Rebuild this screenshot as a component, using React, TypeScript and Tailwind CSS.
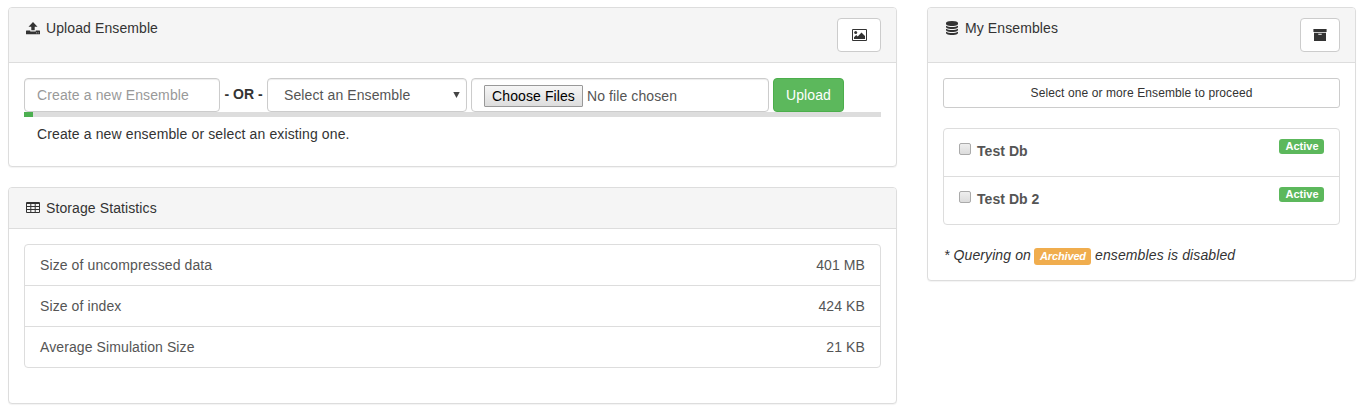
import type { ReactNode } from 'react';

const UploadIcon = () => (
  <svg className="mt-[14px] h-[13px] w-[14px] shrink-0" viewBox="0 0 14 13" fill="currentColor">
    <path d="M7 0 11.500 4.700H8.700V8.200H5.300V4.700H2.500z" />
    <path fillRule="evenodd" d="M.4 8.500h3.900v1h5.400v-1h3.900q.4 0 .4.400v3q0 .4-.4.400H.4q-.4 0-.4-.4v-3q0-.4.4-.4zM10 10.500v.8h.8v-.8zM11.800 10.500v.8h.8v-.8z" />
  </svg>
);

const TableIcon = () => (
  <svg className="mt-[14px] h-[12px] w-[14px] shrink-0" viewBox="0 0 14 12" fill="currentColor">
    <path
      fillRule="evenodd"
      d="M1 0h12a1 1 0 0 1 1 1v9a1 1 0 0 1-1 1H1a1 1 0 0 1-1-1V1a1 1 0 0 1 1-1zM1 2.100v2h3.300v-2zM5.300 2.100v2h3.400v-2zM9.700 2.100v2H13v-2zM1 5.100v2h3.300v-2zM5.300 5.100v2h3.400v-2zM9.700 5.100v2H13v-2zM1 8.100v2h3.300v-2zM5.300 8.100v2h3.400v-2zM9.700 8.100v2H13v-2z"
    />
  </svg>
);

const DatabaseIcon = () => (
  <svg className="mt-[13px] mr-px ml-px h-[14px] w-[12px] shrink-0" viewBox="0 0 1536 1792" preserveAspectRatio="none" fill="currentColor">
    <path d="M768 768q237 0 443-43t325-127v170q0 69-103 128t-280 93.500-385 34.500-385-34.500-280-93.500-103-128V598q119 84 325 127t443 43zM768 1536q237 0 443-43t325-127v170q0 69-103 128t-280 93.500-385 34.500-385-34.500-280-93.500-103-128v-170q119 84 325 127t443 43zM768 1152q237 0 443-43t325-127v170q0 69-103 128t-280 93.500-385 34.500-385-34.500-280-93.500-103-128V982q119 84 325 127t443 43zM768 0q208 0 385 34.500t280 93.500 103 128v128q0 69-103 128t-280 93.500T768 640t-385-34.500T103 512 0 384V256q0-69 103-128t280-93.500T768 0z" />
  </svg>
);

const PictureIcon = () => (
  <svg className="h-[12px] w-[15px]" viewBox="0 0 15 12" fill="currentColor">
    <path fillRule="evenodd" d="M1 0h13a1 1 0 0 1 1 1v10a1 1 0 0 1-1 1H1a1 1 0 0 1-1-1V1a1 1 0 0 1 1-1zM1 1v10h13V1z" />
    <circle cx="3.700" cy="3.500" r="1.500" />
    <path d="M2 10V8.200l2.200-2.200 1.500 1.500L9.500 3.500 13 7V10z" />
  </svg>
);

const ArchiveIcon = () => (
  <svg className="h-[12px] w-[14px]" viewBox="0 0 14 12" fill="currentColor">
    <path d="M.4 0h13.200v3H.4z" />
    <path fillRule="evenodd" d="M1 3.700h12V12H1zM5.300 4.800v1h3.400v-1z" />
  </svg>
);

function Panel({ icon, title, action, className, children }: {
  icon: ReactNode;
  title: string;
  action?: ReactNode;
  className: string;
  children: ReactNode;
}) {
  return (
    <section className={`rounded-[4px] border border-[#ddd] bg-white shadow-[0_1px_1px_rgba(0,0,0,0.05)] ${className}`}>
      <header className={`flex items-start rounded-t-[3px] border-b border-[#ddd] bg-[#f5f5f5] pr-[15px] pl-[17px] ${action ? 'h-[55px]' : 'h-[41px]'}`}>
        {icon}
        <h3 className="ml-[6px] grow pt-[10px]">{title}</h3>
        {action}
      </header>
      <div className="p-[15px]">{children}</div>
    </section>
  );
}

const stats = [
  ['Size of uncompressed data', '401 MB'],
  ['Size of index', '424 KB'],
  ['Average Simulation Size', '21 KB'],
];

export default function App() {
  return (
    <main className="flex h-[415px] items-start gap-[30px] bg-white pt-[7px] pl-[8px] font-['Liberation_Sans',Arial,sans-serif] text-[14px] leading-[20px] tracking-[0.1px] text-[#333]">
      <div className="flex w-[889px] flex-col gap-[20px]">
        <Panel
          className="h-[160px]"
          icon={<UploadIcon />}
          title="Upload Ensemble"
          action={
            <button className="mt-[10px] flex h-[34px] w-[44px] items-center justify-center rounded-[4px] border border-[#ccc] bg-white">
              <PictureIcon />
            </button>
          }
        >
          <form className="flex h-[34px]">
            <input
              className="h-[34px] w-[196px] rounded-[4px] border border-[#ccc] px-[12px] tracking-[0.12px] shadow-[inset_0_1px_1px_rgba(0,0,0,0.075)] placeholder:text-[#999]"
              placeholder="Create a new Ensemble"
            />
            <b className="w-[47px] pt-[6px] text-center tracking-normal whitespace-nowrap">- OR -</b>
            <div className="flex w-[200px] items-center justify-between rounded-[4px] border border-[#ccc] pr-[6px] pl-[16px] text-[#555] shadow-[inset_0_1px_1px_rgba(0,0,0,0.075)]">
              <span>Select an Ensemble</span>
              <svg className="h-[6px] w-[7px]" viewBox="0 0 7 6" fill="#444">
                <path d="M.3 0h6.400L3.500 6z" />
              </svg>
            </div>
            <div className="ml-[4px] flex w-[298px] items-start rounded-[4px] border border-[#ccc] pt-[6px] pl-[12px] text-[#555] shadow-[inset_0_1px_1px_rgba(0,0,0,0.075)]">
              <button type="button" className="h-[22px] w-[99px] rounded-[1px] border border-[#999] bg-linear-to-b from-[#f6f6f6] to-[#dddddd] whitespace-nowrap text-black">
                Choose Files
              </button>
              <span className="ml-[4px] pt-[1px]">No file chosen</span>
            </div>
            <button type="button" className="ml-[4px] w-[71px] rounded-[4px] border border-[#4cae4c] bg-[#5cb85c] text-white">
              Upload
            </button>
          </form>
          <div className="h-[5px] bg-[#ddd]">
            <div className="h-full w-[9px] bg-[#4caf50]" />
          </div>
          <p className="pt-[7px] pl-[13px] tracking-[0.125px]">Create a new ensemble or select an existing one.</p>
        </Panel>

        <Panel className="h-[217px]" icon={<TableIcon />} title="Storage Statistics">
          <ul className="divide-y divide-[#ddd] rounded-[4px] border border-[#ddd] text-[#555]">
            {stats.map(([label, value]) => (
              <li key={label} className="flex justify-between px-[15px] py-[10px]">
                <span>{label}</span>
                <span>{value}</span>
              </li>
            ))}
          </ul>
        </Panel>
      </div>

      <Panel
        className="h-[274px] w-[429px]"
        icon={<DatabaseIcon />}
        title="My Ensembles"
        action={
          <button className="mt-[10px] flex h-[34px] w-[40px] items-center justify-center rounded-[4px] border border-[#ccc] bg-white">
            <ArchiveIcon />
          </button>
        }
      >
        <button className="block h-[30px] w-full rounded-[3px] border border-[#ccc] text-[12px] leading-[18px]">
          Select one or more Ensemble to proceed
        </button>
        <ul className="mt-[20px] divide-y divide-[#ddd] rounded-[4px] border border-[#ddd] text-[#555]">
          {['Test Db', 'Test Db 2'].map((name) => (
            <li key={name} className="flex h-[48px] items-start px-[15px] last:h-[47px]">
              <span className="mt-[14px] h-[12px] w-[12px] rounded-[2px] border border-[#aaa] bg-linear-to-b from-[#eee] to-[#dcdcdc]" />
              <b className="ml-[6px] grow pt-[12px] tracking-[0.05px]">{name}</b>
              <span className="mt-[10px] h-[15px] w-[45px] rounded-[3px] bg-[#5cb85c] pl-px text-center text-[11px] leading-[15px] font-bold tracking-normal text-white">
                Active
              </span>
            </li>
          ))}
        </ul>
        <p className="mt-[20px] flex italic">
          <span className="w-[87px] pl-px whitespace-nowrap">* Querying on</span>
          <span className="mr-[4px] ml-[4px] mt-[3px] h-[17px] w-[57px] rounded-[3px] bg-[#f0ad4e] pl-px text-center text-[11px] leading-[17px] font-bold tracking-[-0.15px] text-white">
            Archived
          </span>
          <span className="tracking-[0.12px]">ensembles is disabled</span>
        </p>
      </Panel>
    </main>
  );
}
